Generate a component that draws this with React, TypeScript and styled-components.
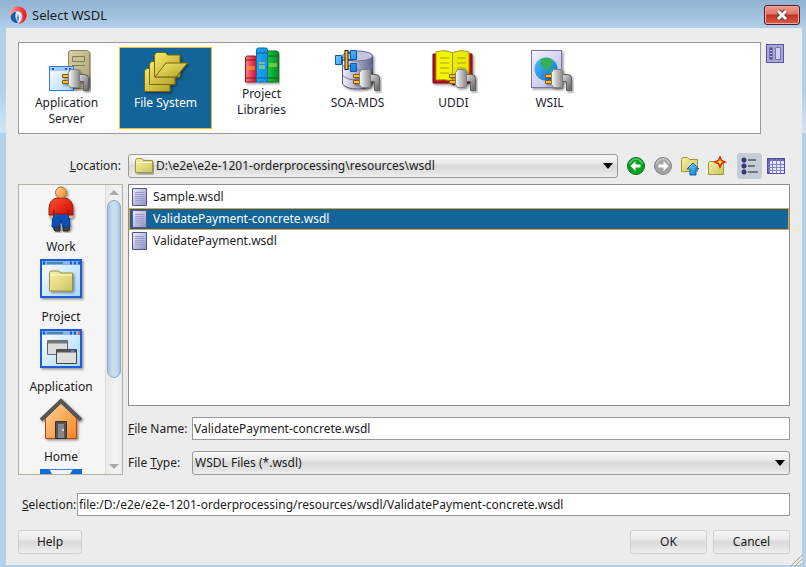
import React, { ReactNode, useState } from 'react';
import styled, { createGlobalStyle } from 'styled-components';

const GlobalStyle = createGlobalStyle`
  *, *::before, *::after { box-sizing: border-box; }
  body {
    margin: 0;
    background: #b1d0ea;
    color: #1c1c1c;
    font: 400 12px/16px "Noto Sans", "Open Sans", sans-serif;
  }
  button, input, select { font: inherit; color: inherit; margin: 0; }
  svg { display: block; flex: none; }
`;

/* ---------- window frame ---------- */

const Window = styled.main`
  display: flex;
  flex-direction: column;
  min-height: 100vh;
  padding: 0 4px 2px 6px;
  background: linear-gradient(#8fb3d1 0, #b0cfe9 28px, #b1d0ea 90px, #d3e4f4 132px, #b1d0ea 134px);
`;

const TitleBar = styled.header`
  display: flex;
  align-items: center;
  height: 28px;
  padding: 2px 2px 0 3px;
  gap: 5px;
`;

const Title = styled.h1`
  flex: 1;
  margin: 0;
  font-size: 13px;
  font-weight: 400;
`;

const CloseButton = styled.button`
  display: grid;
  place-items: center;
  width: 36px;
  height: 20px;
  padding: 0;
  border: 1px solid #5b1a25;
  border-radius: 3px;
  box-shadow: inset 0 0 0 1px #f0a8a0;
  background: linear-gradient(#ee9a90 0, #e0766b 45%, #c3301f 50%, #d8604f 100%);
`;

const Client = styled.div`
  flex: 1;
  display: flex;
  flex-direction: column;
  padding: 14px 12px 11px;
  background: #ececec;
`;

/* ---------- source strip ---------- */

const SourceRow = styled.div`
  display: flex;
  align-items: flex-start;
  gap: 3px;
  padding-right: 4px;
`;

const SourceStrip = styled.nav`
  flex: 1;
  display: flex;
  gap: 3px;
  height: 92px;
  padding: 4px 1px;
  border: 1px solid #999;
  background: #fff;
`;

const SourceTile = styled.button<{ $selected?: boolean }>`
  display: flex;
  flex-direction: column;
  align-items: center;
  width: 93px;
  height: 82px;
  padding: 0;
  border: 0;
  box-shadow: ${(p) => (p.$selected ? 'inset 0 0 0 1px #eebb22' : 'none')};
  background: ${(p) => (p.$selected ? '#136599' : 'transparent')};
  color: ${(p) => (p.$selected ? '#fff' : '#1c1c2c')};
  &:first-child { margin-right: 3px; }
`;

const TileLabel = styled.span`
  max-width: 80px;
  text-align: center;
`;

/* ---------- location row ---------- */

const LocationRow = styled.div`
  display: flex;
  align-items: center;
  height: 26px;
  margin-top: 19px;
`;

const Label = styled.label<{ $width: number; $end?: boolean }>`
  flex: none;
  width: ${(p) => p.$width}px;
  padding-right: ${(p) => (p.$end ? '7px' : '0')};
  text-align: ${(p) => (p.$end ? 'right' : 'left')};
  white-space: nowrap;
`;

const ComboBox = styled.div`
  flex: 1;
  display: flex;
  align-items: center;
  height: 24px;
  padding: 0 3px 0 2px;
  border: 1px solid #999;
  border-radius: 3px;
  background: linear-gradient(#f7f7f7 0, #ebebeb 35%, #d9d9d9 50%, #e6e6e6 85%, #efefef 100%);
  & > svg:first-child { margin: 0 2px 0 3px; }
`;

const ComboSelect = styled.select`
  flex: 1;
  min-width: 0;
  height: 22px;
  padding: 0;
  border: 0;
  outline: 0;
  appearance: none;
  background: transparent;
`;

const Tools = styled.div`
  display: flex;
  align-items: center;
  gap: 5px;
  margin-left: 7px;
  margin-right: 3px;
`;

const ToolButton = styled.button`
  display: grid;
  place-items: center;
  width: 22px;
  height: 22px;
  padding: 0;
  border: 0;
  background: transparent;
`;

const ViewButton = styled.button`
  display: grid;
  place-items: center;
  width: 25px;
  height: 26px;
  margin: 0 -2px 0 4px;
  padding: 0;
  border: 0;
  border-radius: 3px;
  background: #c4cdd6;
`;

/* ---------- main area ---------- */

const Body = styled.div`
  flex: 1;
  display: flex;
  gap: 5px;
  margin-top: 5px;
`;

const Places = styled.aside`
  display: flex;
  width: 105px;
  height: 291px;
  border: 1px solid #b4b4a4;
  background: #f5f5f5;
  overflow: hidden;
`;

const PlaceList = styled.div`
  flex: 1;
  display: flex;
  flex-direction: column;
`;

const Place = styled.button`
  flex: none;
  display: flex;
  flex-direction: column;
  align-items: center;
  gap: 6px;
  width: 84px;
  height: 70px;
  padding: 0;
  border: 0;
  background: transparent;
`;

const ScrollTrack = styled.div`
  display: flex;
  flex-direction: column;
  align-items: center;
  width: 17px;
  border-left: 1px solid #dcdcdc;
  background: linear-gradient(90deg, #e9e9e9, #f4f4f4 60%, #ececec);
`;

const Arrow = styled.div<{ $up?: boolean }>`
  flex: none;
  width: 0;
  margin: 5px 0;
  border: 5px solid transparent;
  ${(p) => (p.$up ? 'border-top: 0; border-bottom-color: #a9a9a9;' : 'border-bottom: 0; border-top-color: #a9a9a9;')}
`;

const Thumb = styled.div`
  flex: 177 0 0;
  width: 14px;
  border: 1px solid #8eabc5;
  border-radius: 7px;
  background: linear-gradient(90deg, #a9c3dd, #cbdff0 40%, #c3d8ec 75%, #a5bfd9);
`;

const TrackRest = styled.div`
  flex: 82 0 0;
`;

const Main = styled.div`
  flex: 1;
  display: flex;
  flex-direction: column;
  min-width: 0;
`;

const FileList = styled.ul`
  height: 222px;
  margin: 0 0 11px;
  padding: 1px 0 0;
  border: 1px solid #8c8c8c;
  background: #fff;
  list-style: none;
`;

const FileRow = styled.li<{ $selected: boolean }>`
  display: flex;
  align-items: center;
  gap: 4px;
  height: 22px;
  padding: 0 2px;
  box-shadow: ${(p) => (p.$selected ? 'inset 0 0 0 1px #e8a32c' : 'none')};
  background: ${(p) => (p.$selected ? '#136599' : 'transparent')};
  color: ${(p) => (p.$selected ? '#fff' : 'inherit')};
`;

const Field = styled.div`
  display: flex;
  align-items: center;
  & + & { margin-top: 11px; }
`;

const TextInput = styled.input`
  flex: 1;
  min-width: 0;
  height: 23px;
  padding: 0 1px;
  border: 1px solid #999;
  outline: 0;
  background: #fff;
`;

const SelectionRow = styled.div`
  display: flex;
  align-items: center;
  margin-top: 17px;
  padding-left: 4px;
`;

const Actions = styled.footer`
  display: flex;
  gap: 6px;
  margin-top: 14px;
`;

const PushButton = styled.button<{ $width: number }>`
  width: ${(p) => p.$width}px;
  height: 24px;
  padding: 0;
  border: 1px solid #d0d0d0;
  border-radius: 3px;
  background: linear-gradient(#f6f6f6 0, #ececec 35%, #dadada 50%, #e6e6e6 80%, #efefef 100%);
`;

const Spacer = styled.div`
  flex: 1;
`;

const Grip = styled.svg`
  position: absolute;
  right: 4px;
  bottom: 1px;
`;

const DefsSvg = styled.svg`
  position: absolute;
`;

/* ---------- drawings ---------- */

const Gradient = ({ id, a, b, diag }: { id: string; a: string; b: string; diag?: boolean }) => (
  <linearGradient id={id} x1="0" y1="0" x2="1" y2={diag ? '1' : '0'}>
    <stop offset="0" stopColor={a} />
    <stop offset="1" stopColor={b} />
  </linearGradient>
);

const Defs = () => (
  <DefsSvg width="0" height="0" aria-hidden="true">
    <defs>
      <Gradient id="metal" a="#fafafa" b="#888" />
      <Gradient id="dark" a="#ddd" b="#606060" diag />
      <Gradient id="folder" a="#f6f2a2" b="#cdc466" diag />
      <Gradient id="gold" a="#f4ea6c" b="#b8a028" diag />
      <Gradient id="sky" a="#ffffff" b="#a4d8ff" diag />
      <Gradient id="beige" a="#d6d0a8" b="#aca47a" diag />
      <Gradient id="red" a="#ff8085" b="#c8102c" />
      <Gradient id="blue" a="#10a8f4" b="#1c8ed8" />
      <Gradient id="green" a="#18c838" b="#088a2c" />
      <Gradient id="drum" a="#f2f2fc" b="#62628e" />
      <Gradient id="lilac" a="#f0f0fc" b="#8c8cc8" diag />
      <Gradient id="page" a="#f2f2fe" b="#b8b8e4" diag />
      <Gradient id="globe" a="#50c4ff" b="#0868c8" diag />
      <Gradient id="shirt" a="#ff5038" b="#cc0c00" diag />
      <Gradient id="orange" a="#ffd49c" b="#f88420" diag />
      <Gradient id="azure" a="#7cd4ff" b="#0878e0" diag />
      <Gradient id="ring" a="#f4a8a0" b="#f80c18" />
      <filter id="shadow" x="-20%" y="-20%" width="150%" height="150%">
        <feDropShadow dx="1.5" dy="1.5" stdDeviation="1" floodOpacity="0.4" />
      </filter>
    </defs>
  </DefsSvg>
);

const Icon = ({ w, h = w, children }: { w: number; h?: number; children: ReactNode }) => (
  <svg width={w} height={h} viewBox={`0 0 ${w} ${h}`} aria-hidden="true">{children}</svg>
);

const Plug = () => (
  <g filter="url(#shadow)">
    <path d="M19.500 27.500h7v3h-7zM19.500 33.500h7v3h-7z" fill="#ffc020" stroke="#8a5a00" />
    <path d="M36 27.500h6q3.500 0 3.500 4v12h-5v-9H36z" fill="url(#dark)" stroke="#606060" />
    <path d="M27.500 22.500h7q2 0 2 2v14q0 2-2 2h-7l-2-3v-12z" fill="url(#metal)" stroke="#808080" />
  </g>
);

const ServerIcon = () => (
  <Icon w={48}>
    <g filter="url(#shadow)">
      <path d="M25.500 4.500l2-1h17l2 2v36h-21z" fill="url(#beige)" stroke="#8c8560" />
      <path d="M29.500 9.500h12v5h-12zM29 18.500h13" fill="#c8c198" stroke="#857d54" />
    </g>
    <rect x="6.500" y="19.500" width="24" height="24" fill="url(#sky)" stroke="#3a78e0" />
    <path d="M7 20h23v4H7z" fill="#a8c8f8" />
    <path d="M9 22h2M22 22h2M26 22h2" stroke="#1858d8" strokeWidth="2" />
    <Plug />
  </Icon>
);

const FoldersIcon = () => (
  <Icon w={48}>
    <g filter="url(#shadow)" stroke="#75680c" strokeLinejoin="round">
      <path d="M2.500 24l2-2.500h4l2 2.500h17.500v20.500H2.500z" fill="url(#gold)" />
      <path d="M7.500 17l2-2.500h4l2 2.500h17.500v20.500H7.500z" fill="url(#gold)" />
      <path d="M12.500 8l2-2.500h9l2 2.500h12.500v22H12.500z" fill="url(#gold)" />
      <path d="M13 30l11-14h21.500L34 30z" fill="url(#gold)" />
    </g>
  </Icon>
);

const BooksIcon = () => (
  <Icon w={36} h={39}>
    <g filter="url(#shadow)">
      <path d="M1.500 11q0-2 2-2h7q2 0 2 2v24h-11z" fill="url(#red)" stroke="#a01028" />
      <path d="M23.500 6q0-2 2-2h7q2 0 2 2v29h-11z" fill="url(#green)" stroke="#087028" />
      <path d="M12.500 3q0-2 2-2h7q2 0 2 2v32h-11z" fill="url(#blue)" stroke="#0c6cb0" />
    </g>
    <path d="M2 13h10M2 31h10" stroke="#8a1028" />
    <path d="M13 6h10M13 31h10" stroke="#0a5ca0" />
    <path d="M24 9h10M24 31h10" stroke="#066020" />
    <path d="M3 20h8M3 22h8" stroke="#ffb010" />
    <path d="M15 16h6M15 19h6M15 21h6M25 17h8M25 19h8" stroke="#c8f040" />
  </Icon>
);

const MdsIcon = () => (
  <Icon w={48}>
    <g filter="url(#shadow)">
      <path d="M8.500 9v28q4 5 15 5t15-5V9z" fill="url(#drum)" stroke="#55557e" />
      <ellipse cx="23.500" cy="9" rx="15" ry="5" fill="#c4c4dc" stroke="#6c6c94" />
      <path d="M8.500 28q4 5 15 5t15-5M8.500 18q4 5 15 5t15-5" fill="none" stroke="#77779e" />
    </g>
    <path d="M7 13h12M14 6h8M14 19h8" stroke="#222" />
    <path d="M12.500 3v20" stroke="#222" strokeWidth="4" />
    <path d="M12.500 4v18" stroke="#ffc020" strokeWidth="2" />
    <g fill="url(#azure)" stroke="#0a58b8">
      <path d="M1.500 8.500h6v9h-6zM16.500 3.500h6v9h-6zM16.500 16.500h6v8h-6z" />
    </g>
    <Plug />
  </Icon>
);

const BookIcon = () => (
  <Icon w={48}>
    <g filter="url(#shadow)">
      <path d="M3 7h39v29H26l-2 2-3-2H3z" fill="#b80c1c" stroke="#7c0814" />
      <path d="M6 5q9-3 16.500 1v28q-7-2-16.500-1z" fill="#f4f400" stroke="#9a9a20" />
      <path d="M39 5q-9-3-16.500 1v28q7-2 16.500-1z" fill="#ecec00" stroke="#9a9a20" />
    </g>
    <path d="M10 11h9M10 16h9M10 21h9M10 26h9M27 11h9M27 16h9M27 21h9" stroke="#a4a420" />
    <Plug />
  </Icon>
);

const WebIcon = () => (
  <Icon w={48}>
    <rect x="5.500" y="3.500" width="30" height="37" fill="url(#page)" stroke="#7676b0" filter="url(#shadow)" />
    <circle cx="20" cy="22" r="11.500" fill="url(#globe)" />
    <path d="M15 12q6-3 11 1l1 4-4 3-2 4-4-3-3-4zM24 23l6-2q1 5-2 8l-4-1z" fill="#38b058" />
    <Plug />
  </Icon>
);

const folderPath = 'M1.500 3.500l1-2h5l2 2h8v12h-16z';

const FolderIcon = () => (
  <Icon w={20} h={18}>
    <path d="M1.500 3.500l1-2h5l2 2h9v12h-17z" fill="url(#folder)" stroke="#a09638" filter="url(#shadow)" />
    <path d="M2 5.500h16" stroke="#fffce0" />
  </Icon>
);

const RoundArrow = ({ left }: { left?: boolean }) => (
  <Icon w={20}>
    <circle cx="10" cy="10" r="8.500" fill={left ? '#08a020' : '#a4a4a4'} stroke={left ? '#067018' : '#858585'} />
    <path d="M3.500 8q2-5 6.500-5t6.500 5" fill="none" stroke="#fff" strokeOpacity=".3" strokeWidth="2" />
    <path
      d={left ? 'M4.500 10l5-5v3.500h5v3h-5v3.500z' : 'M15.500 10l-5-5v3.500h-5v3h5v3.500z'}
      fill="#fff"
    />
  </Icon>
);

const UpFolderIcon = () => (
  <Icon w={20}>
    <path d={folderPath} fill="url(#folder)" stroke="#a09638" />
    <path d="M13 7l6 6h-3v6h-6v-6H7z" fill="url(#azure)" stroke="#0860b8" />
  </Icon>
);

const NewFolderIcon = () => (
  <Icon w={20}>
    <path d="M1.500 7.500l1-2h5l2 2h7v11h-15z" fill="url(#folder)" stroke="#a09638" />
    <path d="M13 1l1.500 3.500L18 6l-3.500 1.500L13 11l-1.500-3.500L8 6l3.500-1.500z" fill="#ffe040" stroke="#d82808" strokeWidth="1.500" />
  </Icon>
);

const ListIcon = () => (
  <Icon w={20}>
    <path d="M8 4h8M8 10h7M8 16h10" stroke="#6c747c" strokeWidth="2" />
    <path d="M4 3v14" stroke="#8080a8" />
    <g fill="#38387c"><circle cx="4" cy="4" r="2.500" /><circle cx="4" cy="10" r="2.500" /><circle cx="4" cy="16" r="2.500" /></g>
  </Icon>
);

const GridIcon = () => (
  <Icon w={18} h={16}>
    <rect x=".5" y=".5" width="17" height="15" fill="#e4e4f8" stroke="#50509a" />
    <path d="M1 2h16M2 1v14" stroke="#6868b0" strokeWidth="2" />
    <path d="M5.500 1v14M9.500 1v14M13.500 1v14M1 6.500h16M1 9.500h16M1 12.500h16" stroke="#8484c0" />
  </Icon>
);

const PaneIcon = () => (
  <Icon w={18} h={19}>
    <rect x=".5" y=".5" width="17" height="18" fill="#a8a8d8" stroke="#58589c" />
    <path d="M3.500 3.500h3v12h-3zM9.500 3.500h5v12h-5z" fill="#d0d0f0" stroke="#7474b4" />
    <path d="M5 4v11" stroke="#5050a0" strokeWidth="2" strokeDasharray="2 1" />
  </Icon>
);

const FileIcon = () => (
  <Icon w={18} h={20}>
    <path d="M1.500 1.500h14v17h-14z" fill="url(#lilac)" stroke="#54548c" />
    <path d="M4 5.500h9M4 7.500h9M4 9.500h9M4 11.500h9M4 13.500h9" stroke="#9c9ccc" />
  </Icon>
);

const PersonIcon = () => (
  <Icon w={48}>
    <g filter="url(#shadow)">
      <path d="M17 40q-1 5 1 6h5v-6zM26 40v6h5q3-1 0-6z" fill="#444" stroke="#222" />
      <path d="M16 27h16l1 15h-7l-2-7-2 7h-7z" fill="#0c50b8" stroke="#083478" />
      <path d="M12 30h4v3h-4zM32 30h4v3h-4z" fill="#e8b078" />
      <path d="M20 13h8q7 1 8 10v7h-4l-1-5v4H17v-4l-1 5h-4v-7q1-9 8-10z" fill="url(#shirt)" stroke="#a01408" />
      <circle cx="24" cy="7.500" r="5.500" fill="url(#orange)" stroke="#a87038" />
    </g>
  </Icon>
);

const MiniWindow = ({ children }: { children: ReactNode }) => (
  <Icon w={48}>
    <rect x="4" y="5" width="40" height="37" fill="url(#sky)" stroke="#1c5cd8" strokeWidth="2" filter="url(#shadow)" />
    <path d="M5 6h38v4H5z" fill="#86b8ec" />
    <path d="M10 8h16" stroke="#4c84b0" strokeWidth="2" />
    <path d="M6 8h2M33 8h2M37 8h2M41 8h2" stroke="#1058e0" strokeWidth="3" />
    {children}
  </Icon>
);

const ProjectIcon = () => (
  <MiniWindow>
    <path d="M12.500 18l1-2h8l2 2h12v18h-23z" fill="url(#folder)" stroke="#9a9038" filter="url(#shadow)" />
    <path d="M13 20h22" stroke="#fffcd0" />
  </MiniWindow>
);

const AppIcon = () => (
  <MiniWindow>
    <path d="M10.500 15.500h20v14h-20z" fill="#dcdcdc" stroke="#666" />
    <path d="M11 17h19" stroke="#777" strokeWidth="3" />
    <path d="M19.500 24.500h20v14h-20z" fill="#dedede" stroke="#444" />
    <path d="M20 26h19" stroke="#555" strokeWidth="3" />
    <path d="M25 17h3M34 26h3" stroke="#5878e0" strokeWidth="2" />
    <path d="M41 8h2" stroke="#f06840" strokeWidth="3" />
  </MiniWindow>
);

const HomeIcon = () => (
  <Icon w={48}>
    <g filter="url(#shadow)">
      <path d="M8.500 23L24 8l15.500 15v20.500h-31z" fill="url(#orange)" stroke="#c04010" />
      <path d="M4 25L24 6l20 19" fill="none" stroke="#555" strokeWidth="4" />
      <path d="M18.500 26.500h11v17h-11z" fill="#555" stroke="#333" />
      <path d="M21 29h6v14h-6z" fill="#888" />
      <circle cx="26" cy="35" r="1" fill="#eee" />
    </g>
  </Icon>
);

const DesktopIcon = () => (
  <Icon w={48}>
    <path d="M3 4h42v30H3z" fill="#0c6cd8" />
    <path d="M12 4h24l-3 5H15z" fill="#eef6ff" />
    <path d="M12 4.500h24" stroke="#5080d8" />
  </Icon>
);

const Caret = () => (
  <Icon w={12} h={8}><path d="M1 1h10L6 7z" fill="#000" /></Icon>
);

const LogoIcon = () => (
  <Icon w={18}>
    <path d="M1 11Q1 1 9 1q8 1 8 8 0 7-7 8.500" fill="none" stroke="url(#ring)" strokeWidth="1" />
    <path d="M.5 9Q1 .5 9 .5q8 .5 8.500 8.500-.5 7.500-8 8.500 4-3 4-7.500Q13 5 8.500 5 4 5 .5 9z" fill="url(#ring)" />
    <path d="M7 6q5.500-1 5.500 4.500Q12 15 9 17 7 12 7 6z" fill="#e4eefa" />
    <path d="M1.500 11Q3 6 7 6q-2.500 5 2 11Q2.500 17 1.500 11z" fill="#1c58a8" />
    <path d="M9 8q-2 4 0 8 2-4 0-8z" fill="#4c8cd0" />
  </Icon>
);

/* ---------- data ---------- */

const sources: { name: string; icon: ReactNode }[] = [
  { name: 'Application Server', icon: <ServerIcon /> },
  { name: 'File System', icon: <FoldersIcon /> },
  { name: 'Project Libraries', icon: <BooksIcon /> },
  { name: 'SOA-MDS', icon: <MdsIcon /> },
  { name: 'UDDI', icon: <BookIcon /> },
  { name: 'WSIL', icon: <WebIcon /> },
];

const places: { name: string; icon: ReactNode }[] = [
  { name: 'Work', icon: <PersonIcon /> },
  { name: 'Project', icon: <ProjectIcon /> },
  { name: 'Application', icon: <AppIcon /> },
  { name: 'Home', icon: <HomeIcon /> },
  { name: '', icon: <DesktopIcon /> },
];

const files = ['Sample.wsdl', 'ValidatePayment-concrete.wsdl', 'ValidatePayment.wsdl'];

const directory = 'D:\\e2e\\e2e-1201-orderprocessing\\resources\\wsdl';
const directoryUrl = 'file:/D:/e2e/e2e-1201-orderprocessing/resources/wsdl/';

export default function App() {
  const [source, setSource] = useState('File System');
  const [file, setFile] = useState(files[1]);

  return (
    <Window>
      <GlobalStyle />
      <Defs />
      <TitleBar>
        <LogoIcon />
        <Title>Select WSDL</Title>
        <CloseButton aria-label="Close">
          <Icon w={14} h={12}>
            <path d="M3 2l8 8M11 2l-8 8" stroke="#5c4848" strokeWidth="5" />
            <path d="M3 2l8 8M11 2l-8 8" stroke="#f4f4f4" strokeWidth="3" />
          </Icon>
        </CloseButton>
      </TitleBar>
      <Client>
        <SourceRow>
          <SourceStrip aria-label="Sources">
            {sources.map((s) => (
              <SourceTile key={s.name} $selected={s.name === source} onClick={() => setSource(s.name)}>
                {s.icon}
                <TileLabel>{s.name}</TileLabel>
              </SourceTile>
            ))}
          </SourceStrip>
          <ToolButton aria-label="Toggle pane"><PaneIcon /></ToolButton>
        </SourceRow>

        <LocationRow>
          <Label htmlFor="location" $width={110} $end><u>L</u>ocation:</Label>
          <ComboBox>
            <FolderIcon />
            <ComboSelect id="location"><option>{directory}</option></ComboSelect>
            <Caret />
          </ComboBox>
          <Tools>
            <ToolButton aria-label="Back"><RoundArrow left /></ToolButton>
            <ToolButton aria-label="Forward"><RoundArrow /></ToolButton>
            <ToolButton aria-label="Up one level"><UpFolderIcon /></ToolButton>
            <ToolButton aria-label="New folder"><NewFolderIcon /></ToolButton>
            <ViewButton aria-label="List view" aria-pressed="true"><ListIcon /></ViewButton>
            <ToolButton aria-label="Details view" aria-pressed="false"><GridIcon /></ToolButton>
          </Tools>
        </LocationRow>

        <Body>
          <Places aria-label="Places">
            <PlaceList>
              {places.map((p, i) => (
                <Place key={i} aria-label={p.name || 'Desktop'}>
                  {p.icon}
                  <span>{p.name}</span>
                </Place>
              ))}
            </PlaceList>
            <ScrollTrack aria-hidden="true">
              <Arrow $up />
              <Thumb />
              <TrackRest />
              <Arrow />
            </ScrollTrack>
          </Places>
          <Main>
            <FileList role="listbox" aria-label="Files">
              {files.map((f) => (
                <FileRow key={f} role="option" aria-selected={f === file} $selected={f === file} onClick={() => setFile(f)}>
                  <FileIcon />
                  {f}
                </FileRow>
              ))}
            </FileList>
            <Field>
              <Label htmlFor="name" $width={64}><u>F</u>ile Name:</Label>
              <TextInput id="name" value={file} readOnly />
            </Field>
            <Field>
              <Label htmlFor="type" $width={64}>File <u>T</u>ype:</Label>
              <ComboBox>
                <ComboSelect id="type"><option>WSDL Files (*.wsdl)</option></ComboSelect>
                <Caret />
              </ComboBox>
            </Field>
          </Main>
        </Body>

        <SelectionRow>
          <Label htmlFor="selection" $width={55}><u>S</u>election:</Label>
          <TextInput id="selection" value={directoryUrl + file} readOnly />
        </SelectionRow>

        <Actions>
          <PushButton $width={64}>Help</PushButton>
          <Spacer />
          <PushButton $width={77}>OK</PushButton>
          <PushButton $width={77}>Cancel</PushButton>
        </Actions>
      </Client>
      <Grip width="12" height="12" viewBox="0 0 12 12" aria-hidden="true">
        <path d="M1 12L12 1M5 12l7-7M9 12l3-3" stroke="#a8a890" />
      </Grip>
    </Window>
  );
}
